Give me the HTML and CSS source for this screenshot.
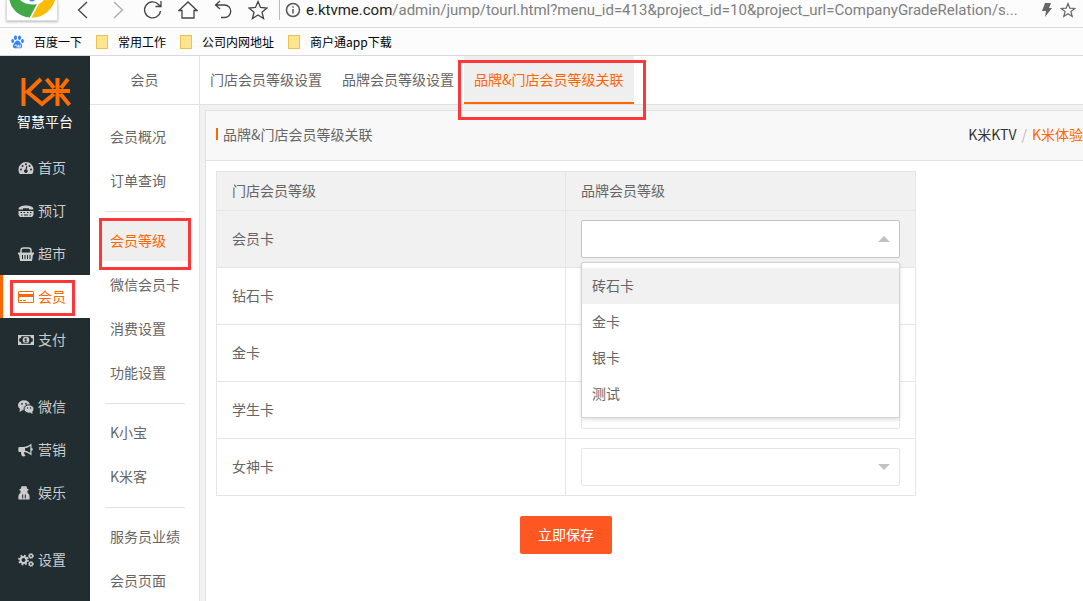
FILE: index.html
```html
<!DOCTYPE html>
<html lang="zh-CN">
<head>
<meta charset="utf-8">
<title>品牌&amp;门店会员等级关联</title>
<link rel="stylesheet" href="styles.css">
</head>
<body>
<header class="browser">
  <div class="toolbar">
    <span class="brand-tile">
      <svg width="50" height="20" viewBox="0 0 50 20">
        <path d="M2.500 0C4 9 12 17 23 17.500L31 4 24 0z" fill="#43a847"/>
        <path d="M24.500 17.500C36 18 45 10 48 0H34z" fill="#fbbc05"/>
        <path d="M31 3.500L23.500 17.500" stroke="#fff" stroke-width="1.500"/>
        <path d="M13 0q4 4 12 4.500T37 0z" fill="#fff"/>
        <path d="M22 0q3 3 6 0z" fill="#3f86f5"/>
      </svg>
    </span>
    <nav class="nav-buttons" aria-label="浏览器导航">
      <button class="tool" aria-label="后退"><svg width="20" height="20" viewBox="0 0 20 20"><path d="M14 2L5.500 10 14 18"/></svg></button>
      <button class="tool dim" aria-label="前进"><svg width="20" height="20" viewBox="0 0 20 20"><path d="M6 2L14.500 10 6 18"/></svg></button>
      <button class="tool" aria-label="刷新"><svg width="20" height="20" viewBox="0 0 20 20"><path d="M17.500 11A8 8 0 1 1 15.500 4.500L18 6.500M18 1v5.500h-5.500"/></svg></button>
      <button class="tool" aria-label="主页"><svg width="20" height="20" viewBox="0 0 20 20"><path d="M1 10.500L10 2l9 8.500H16V18H4V10.500z"/></svg></button>
      <button class="tool" aria-label="撤销"><svg width="20" height="20" viewBox="0 0 20 20"><path d="M7 1L2.500 5 7 9M2.500 5H11.500a6 6 0 0 1 0 12.500H8"/></svg></button>
      <button class="tool" aria-label="收藏"><svg width="20" height="20" viewBox="0 0 20 20"><path d="M10 1.500l2.500 6 6.500.5-5 4.200 1.600 6.300L10 15l-5.600 3.500L6 12.200 1 8l6.500-.5z"/></svg></button>
    </nav>
    <div class="address">
      <svg class="info" width="16" height="16" viewBox="0 0 16 16"><circle cx="8" cy="8" r="6.500"/><path d="M8 7v4.500M8 4.200v1.600"/></svg>
      <span class="url"><b>e.ktvme.com</b>/admin/jump/tourl.html?menu_id=413&amp;project_id=10&amp;project_url=CompanyGradeRelation/s...</span>
      <svg class="bolt" width="12" height="16" viewBox="0 0 12 16"><path d="M4 1h6L8 6h3L4 15l1-6H1z"/></svg>
      <svg class="star" width="16" height="16" viewBox="0 0 16 16"><path d="M8 1.500l1.800 4.700 5 .3-3.900 3.100 1.300 4.900L8 11.800l-4.200 2.700 1.300-4.900L1.200 6.500l5-.3z"/></svg>
    </div>
  </div>
  <nav class="bookmarks" aria-label="书签">
    <a href="#"><svg width="13" height="16" viewBox="0 0 14 16" fill="#3385ff"><ellipse cx="4.800" cy="3.500" rx="1.700" ry="2.400"/><ellipse cx="9.200" cy="3.500" rx="1.700" ry="2.400"/><ellipse cx="1.800" cy="7" rx="1.600" ry="2.100"/><ellipse cx="12.300" cy="7" rx="1.600" ry="2.100"/><path d="M7 6.500c2 0 2.500 2 4 3.300 2 1.700 1 5-1.500 5H4.500c-2.500 0-3.500-3.300-1.500-5C4.500 8.500 5 6.500 7 6.500z"/><path d="M4 12.500a1.300 1.300 0 0 1 2.500-.5v2M8 11v2.500h2V11" fill="none" stroke="#fff"/></svg>百度一下</a>
    <a href="#"><i class="folder"></i>常用工作</a>
    <a href="#"><i class="folder"></i>公司内网地址</a>
    <a href="#"><i class="folder"></i>商户通app下载</a>
  </nav>
</header>
<div class="app">
  <aside class="sidebar">
    <div class="logo">
      <svg width="54" height="30" viewBox="0 0 54 30" role="img" aria-label="K米"><path d="M5.500 1v28M23 2L9.500 15 24 27 36 17M24.500 14H52M39.500 1v28M28.500 2l7.500 9M50 2l-7 9M42.500 17l9 11"/></svg>
      <span>智慧平台</span>
    </div>
    <nav class="menu">
      <a href="#"><svg viewBox="0 0 16 16"><path d="M8 2a7.500 7.500 0 0 0-7.500 7.500A7 7 0 0 0 1.800 14h12.400a7 7 0 0 0 1.300-4.500A7.500 7.500 0 0 0 8 2z"/><g class="cut"><circle cx="3" cy="9.500" r="1"/><circle cx="4.500" cy="6" r="1"/><circle cx="8" cy="4.300" r="1"/><circle cx="11.500" cy="6" r="1"/><circle cx="13" cy="9.500" r="1"/><path d="M8.300 6l1 .2-.6 3.500a1.700 1.700 0 1 1-1.200-.2z"/></g></svg>首页</a>
      <a href="#"><svg viewBox="0 0 16 16"><path d="M.5 6.500C.5 3.500 4 2.500 8 2.500s7.500 1 7.500 4H11V5.300H5v1.200zM.5 8h15v4l-1.500 2H2L.5 12z"/><path class="cut-line" d="M2.500 9.500H4M5.500 9.500H7M9 9.500h1.500M12 9.500h1.500M3 12h1.500M6 12h4M11.500 12H13"/></svg>预订</a>
      <a href="#"><svg viewBox="0 0 16 16"><path d="M3 7V4.500Q3 2 5.500 2h5Q13 2 13 4.500V7" fill="none" stroke="currentColor" stroke-width="1.500"/><path d="M0 6.500h16v2h-1L14 15H2L1 8.500H0z"/><path class="cut-line" d="M4.500 9v4M7 9v4M9.500 9v4M12 9v4"/></svg>超市</a>
      <a href="#" class="active"><svg viewBox="0 0 16 16"><path fill-rule="evenodd" d="M1.500 2h13A1.500 1.500 0 0 1 16 3.500v9a1.500 1.500 0 0 1-1.500 1.500h-13A1.500 1.500 0 0 1 0 12.500v-9A1.500 1.500 0 0 1 1.500 2zM1 3v2h14V3zm0 5v5h14V8zm1 3h2v1H2zm3 0h3v1H5z"/></svg>会员</a>
      <a href="#"><svg viewBox="0 0 16 16"><path fill-rule="evenodd" d="M0 3h16v10H0zm3.500 1.200a2.300 2.300 0 0 1-2.300 2.300v3a2.300 2.300 0 0 1 2.300 2.300h9a2.300 2.300 0 0 1 2.300-2.300v-3a2.300 2.300 0 0 1-2.300-2.300z"/><path fill-rule="evenodd" d="M8 4.700a3.300 3.300 0 1 1 0 6.600 3.300 3.300 0 0 1 0-6.600zM7.500 6L6.300 7v.8l1-.4v2h-1v.8h3v-.8h-.8V6z"/></svg>支付</a>
      <a href="#" class="group"><svg viewBox="0 0 16 16"><ellipse cx="6" cy="6.200" rx="6" ry="5"/><path d="M2 9.500L1.500 13l3.500-2z"/><ellipse class="ring" cx="11" cy="10" rx="5" ry="4.200"/><path d="M12 13.500l2.500 1.500-.3-3z"/><g class="cut"><circle cx="4" cy="4.800" r=".9"/><circle cx="8" cy="4.800" r=".9"/><circle cx="9.500" cy="9" r=".7"/><circle cx="12.600" cy="9" r=".7"/></g></svg>微信</a>
      <a href="#"><svg viewBox="0 0 16 16"><path fill-rule="evenodd" d="M13.500 1.500v4.600a1.300 1.300 0 0 1 0 2.600v4.800C11 11.500 9 10.500 6.500 10c-1 .8 0 2.500 1 3.500-.8 1.300-3 1.300-3.800.2C3.300 12.500 2.800 11 3.200 10H1.500Q.3 10 .3 8.700V6.300Q.3 5 1.500 5H5c3 0 6-1.500 8.500-3.500zM12.300 4C10.500 5.300 9 5.900 7 6.200v2.500c2 .3 3.500 1 5.300 2.200z"/></svg>营销</a>
      <a href="#"><svg viewBox="0 0 16 16"><path d="M3.500 1.500q1.200-1 2.500 0 1.300-1 2.500 0L9.300 4H10.500v1.500H9.500V8c1.700.7 2.500 2.500 2 6.500H.5C0 10.500.8 8.700 2.500 8V5.500h-1V4h1.200z"/><path class="cut-line" d="M4.700 9.500v4M7.300 9.500v4"/></svg>娱乐</a>
      <a href="#" class="group"><svg viewBox="0 0 16 16"><g fill="none" stroke="currentColor"><circle cx="5.500" cy="8" r="3" stroke-width="2"/><circle cx="5.500" cy="8" r="4.600" stroke-width="1.600" stroke-dasharray="1.800 1.800"/><circle cx="13" cy="4" r="1.600" stroke-width="1.400"/><circle cx="13" cy="4" r="2.500" stroke-dasharray="1 1"/><circle cx="13" cy="12" r="1.600" stroke-width="1.400"/><circle cx="13" cy="12" r="2.500" stroke-dasharray="1 1"/></g></svg>设置</a>
    </nav>
  </aside>
  <aside class="submenu">
    <h2>会员</h2>
    <nav>
      <a href="#">会员概况</a>
      <a href="#">订单查询</a>
      <hr>
      <a href="#" class="active">会员等级</a>
      <a href="#">微信会员卡</a>
      <a href="#">消费设置</a>
      <a href="#">功能设置</a>
      <hr>
      <a href="#">K小宝</a>
      <a href="#">K米客</a>
      <hr>
      <a href="#">服务员业绩</a>
      <a href="#">会员页面</a>
    </nav>
  </aside>
  <main class="content">
    <nav class="tabs">
      <a href="#">门店会员等级设置</a>
      <a href="#">品牌会员等级设置</a>
      <a href="#" class="active">品牌&amp;门店会员等级关联</a>
    </nav>
    <section class="panel">
      <div class="panel-head">
        <h1>品牌&amp;门店会员等级关联</h1>
        <div class="crumbs"><a href="#">K米KTV</a><i>/</i><a href="#" class="current">K米体验</a></div>
      </div>
      <form class="form">
        <table>
          <thead><tr><th>门店会员等级</th><th>品牌会员等级</th></tr></thead>
          <tbody>
            <tr class="hover"><td><label for="g1">会员卡</label></td><td><div class="picker open"><select id="g1"><option></option></select>
              <ul class="options"><li class="selected">砖石卡</li><li>金卡</li><li>银卡</li><li>测试</li></ul></div></td></tr>
            <tr><td><label for="g2">钻石卡</label></td><td><div class="picker"><select id="g2"><option></option></select></div></td></tr>
            <tr><td><label for="g3">金卡</label></td><td><div class="picker"><select id="g3"><option></option></select></div></td></tr>
            <tr><td><label for="g4">学生卡</label></td><td><div class="picker"><select id="g4"><option></option></select></div></td></tr>
            <tr><td><label for="g5">女神卡</label></td><td><div class="picker"><select id="g5"><option></option></select></div></td></tr>
          </tbody>
        </table>
        <button type="button" class="save">立即保存</button>
      </form>
    </section>
  </main>
</div>
</body>
</html>
```

FILE: styles.css
```css
* { box-sizing: border-box; }
body {
  margin: 0;
  height: 100vh;
  display: flex;
  flex-direction: column;
  overflow: hidden;
  font: 14px/20px "Noto Sans CJK SC", sans-serif;
  color: #666;
  background: #fff;
}
a { color: inherit; text-decoration: none; }
button { font: inherit; border: 0; padding: 0; background: none; }

/* browser chrome */
.browser { background: #fcfcfc; }
.toolbar { display: flex; height: 28px; border-bottom: 1px solid #d9d9d9; }
.brand-tile {
  flex: none;
  width: 52px;
  height: 21px;
  margin-left: 6px;
  background: #fff;
  border: 1px solid #ddd;
  border-top: 0;
  box-shadow: 0 1px 2px #bbb;
}
.brand-tile svg { display: block; }
.nav-buttons { display: flex; flex: none; gap: 15px; padding-left: 15px; height: 20px; }
.tool { width: 20px; height: 20px; color: #444; }
.tool svg { display: block; fill: none; stroke: currentColor; stroke-width: 1.300; }
.tool.dim { color: #aaa; }
.address {
  flex: 1;
  display: flex;
  align-items: center;
  height: 20px;
  margin-left: 11px;
  padding: 0 7px 0 5px;
  border-left: 1px solid #bbb;
  min-width: 0;
}
.address svg { flex: none; }
.info { fill: none; stroke: #555; stroke-width: 1.500; }
.url {
  flex: 1;
  min-width: 0;
  margin-left: 5px;
  font: 15px/20px Roboto, sans-serif;
  color: #808080;
  white-space: nowrap;
}
.url b { font-weight: 400; color: #222; }
.bolt { fill: #666; margin-right: 7px; }
.star { fill: none; stroke: #666; stroke-width: 1.200; }
.bookmarks {
  display: flex;
  gap: 14px;
  height: 28px;
  padding-left: 11px;
  border-bottom: 1px solid #d9d9d9;
  font-size: 12px;
  color: #000;
}
.bookmarks a { display: flex; align-items: center; gap: 10px; }
.folder { width: 12px; height: 14px; background: #ffe48f; border: 1px solid #e9c44c; }

/* application */
.app { flex: 1; display: flex; min-height: 0; }
.sidebar { width: 90px; flex: none; background: #222d32; color: #ccc; }
.logo { height: 90px; padding-top: 21px; text-align: center; }
.logo svg { display: block; margin: 0 auto; fill: none; stroke: #ff6d00; stroke-width: 4; }
.logo span { display: block; margin-top: 4px; color: #fff; }
.menu a { display: flex; align-items: center; height: 43px; padding: 0 0 2px 18px; gap: 4px; position: relative; }
.menu .group { margin-top: 24px; }
.menu svg { width: 16px; height: 16px; margin-top: 2px; fill: currentColor; }
.menu .cut { fill: #222d32; }
.menu .cut-line { stroke: #222d32; }
.menu .ring { stroke: #222d32; }
.menu .active { background: #fff; color: #ff6600; border-left: 3px solid #ff6600; padding-left: 15px; }

/* highlight frames */
.menu .active::after, .submenu .active::after, .tabs .active::after {
  content: "";
  position: absolute;
  border: 3px solid #fe3838;
  z-index: 5;
}
.menu .active::after { inset: 5px 15px 2px 7px; }

.submenu { width: 110px; flex: none; border-right: 1px solid #e2e2e2; }
.submenu h2 { margin: 0; height: 49px; border-bottom: 1px solid #e2e2e2; font: inherit; line-height: 46px; text-align: center; }
.submenu nav { display: flex; flex-direction: column; gap: 4px; padding: 12px 11px 0 12px; }
.submenu nav a { height: 40px; line-height: 38px; padding-left: 8px; white-space: nowrap; position: relative; }
.submenu hr { width: 80px; height: 1px; margin: 6px auto 5px; border: 0; background: #e2e2e2; }
.submenu nav .active { background: #efefef; color: #ff6600; }
.submenu .active::after { inset: -3px -3px -9px -3px; }

.content { flex: 1; min-width: 0; display: flex; flex-direction: column; background: #f1f1f1; }
.tabs { display: flex; flex: none; height: 49px; background: #fff; border-bottom: 1px solid #e2e2e2; line-height: 46px; }
.tabs a { padding: 0 10px; height: 48px; white-space: nowrap; position: relative; }
.tabs .active { background: #efefef; color: #ff6600; border-bottom: 2px solid #ff6600; }
.tabs .active::after { inset: 4px -12px -18px -6px; }
.panel { flex: 1; margin: 5px 0 0 5px; background: #fff; border: 1px solid #e2e2e2; border-width: 1px 0 0 1px; }
.panel-head { display: flex; align-items: center; justify-content: space-between; height: 50px; padding: 0 0 4px 10px; background: #f8f8f8; border-bottom: 1px solid #e2e2e2; }
.panel-head h1 { margin: 0; padding-left: 5px; border-left: 2px solid #ff6600; font: inherit; line-height: 12px; }
.crumbs { white-space: nowrap; color: #333; }
.crumbs i { margin: 0 5px; color: #bbb; font-style: normal; }
.crumbs .current { color: #ff6600; }
.form { width: 700px; margin: 10px; text-align: center; }
table { width: 100%; table-layout: fixed; border-collapse: collapse; text-align: left; }
th, td { border: 1px solid #e6e6e6; padding: 9px 15px; font-weight: 400; }
th { padding: 8px 15px 10px; }
th:first-child { width: 349px; }
td label { display: block; padding-bottom: 2px; }
thead, .hover { background: #f1f1f1; }
.picker { position: relative; }
.picker select {
  display: block;
  width: 100%;
  height: 38px;
  appearance: none;
  border: 1px solid #e6e6e6;
  border-radius: 2px;
  background: #fff;
  font: inherit;
}
.picker::after {
  content: "";
  position: absolute;
  top: 16px;
  right: 10px;
  border: 6px solid transparent;
  border-top-color: #c2c2c2;
}
.picker.open select { border-color: #c4c4c4; }
.picker.open::after { top: 10px; border-color: transparent transparent #c2c2c2; }
.options {
  position: absolute;
  top: 42px;
  left: 0;
  right: 0;
  z-index: 3;
  margin: 0;
  padding: 5px 0;
  list-style: none;
  background: #fff;
  border: 1px solid #d2d2d2;
  border-radius: 2px;
  box-shadow: 0 2px 4px #0000001f;
}
.options li { height: 36px; padding: 0 10px; line-height: 34px; }
.options .selected { background: #f1f1f1; }
.save { width: 92px; height: 38px; margin-top: 20px; padding-bottom: 2px; border-radius: 2px; background: #ff5722; color: #fff; }
```
